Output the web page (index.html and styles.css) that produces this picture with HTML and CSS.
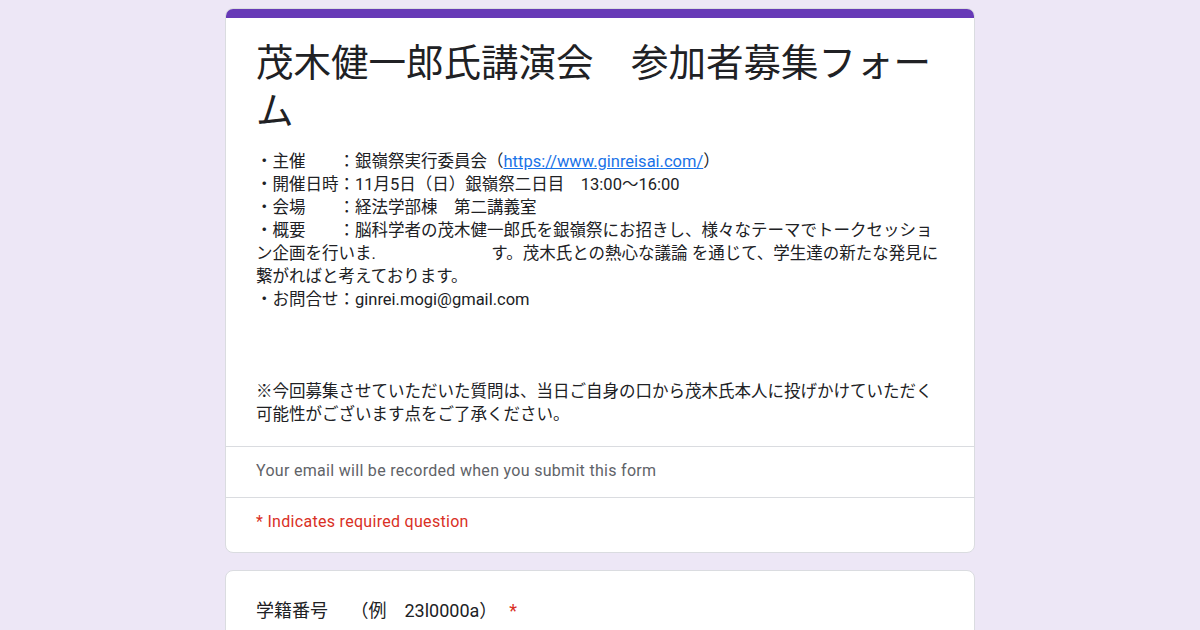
FILE: index.html
```html
<!DOCTYPE html>
<html lang="ja">
<head>
  <meta charset="UTF-8" />
  <title>茂木健一郎氏講演会　参加者募集フォーム</title>
  <link rel="stylesheet" href="styles.css">
</head>
<body>

  <div class="form-page">

    <!-- 헤더 카드 -->
    <div class="card header-card">
      <div class="top-bar"></div>
      <div class="header-main">
        <h1 class="form-title">茂木健一郎氏講演会　参加者募集フォーム</h1>
        <div class="form-desc">
          ・主催　　：銀嶺祭実行委員会（<a href="#">https://www.ginreisai.com/</a>）<br>
          ・開催日時：11月5日（日）銀嶺祭二日目　13:00～16:00<br>
          ・会場　　：経法学部棟　第二講義室<br>
          ・概要　　：脳科学者の茂木健一郎氏を銀嶺祭にお招きし、様々なテーマでトークセッション企画を行いま.　　　　　　　す。茂木氏との熱心な議論 を通じて、学生達の新たな発見に繋がればと考えております。<br>
          ・お問合せ：ginrei.mogi@gmail.com<br>
          <br>
          <br>
          <br>
          ※今回募集させていただいた質問は、当日ご自身の口から茂木氏本人に投げかけていただく<br>
          可能性がございます点をご了承ください。
        </div>
      </div>
      <div class="header-row email-note">Your email will be recorded when you submit this form</div>
      <div class="header-row required-note">* Indicates required question</div>
    </div>

    <!-- 질문 카드 -->
    <div class="card question-card">
      <div class="question-title">学籍番号　 （例　23l0000a）<span class="req">*</span></div>
    </div>

  </div>

</body>
</html>
```

FILE: styles.css
```css
body {
  margin: 0;
  background: #ede7f6;
  font-family: Roboto, "Noto Sans CJK JP", sans-serif;
  color: #202124;
}

.form-page {
  width: 750px;
  margin: 8px auto 0;
  display: flex;
  flex-direction: column;
  gap: 17px;
}

.card {
  background: #fff;
  border: 1px solid #dadce0;
  border-radius: 8px;
  overflow: hidden;
}

.top-bar {
  height: 10px;
  margin: -1px -1px 0;
  background: #673ab7;
}

.header-main {
  padding: 18px 32px 20px 30px;
}

.form-title {
  margin: 0;
  font-family: "Noto Sans CJK JP", sans-serif;
  font-size: 37.5px;
  font-weight: 400;
  line-height: 48px;
}

.form-desc {
  margin-top: 18px;
  font-size: 16.5px;
  line-height: 23px;
}

.form-desc a {
  color: #1a73e8;
  text-decoration: underline;
}

.header-row {
  border-top: 1px solid #dadce0;
  padding: 12px 30px 14px;
  font-size: 16px;
  line-height: 24px;
  letter-spacing: 0.3px;
}

.email-note {
  color: #5f6368;
}

.required-note {
  color: #d93025;
  padding-bottom: 18px;
}

.question-card {
  padding: 28px 30px 40px;
}

.question-title {
  font-size: 18px;
  line-height: 24px;
}

.req {
  color: #d93025;
  margin-left: 12px;
}
```
